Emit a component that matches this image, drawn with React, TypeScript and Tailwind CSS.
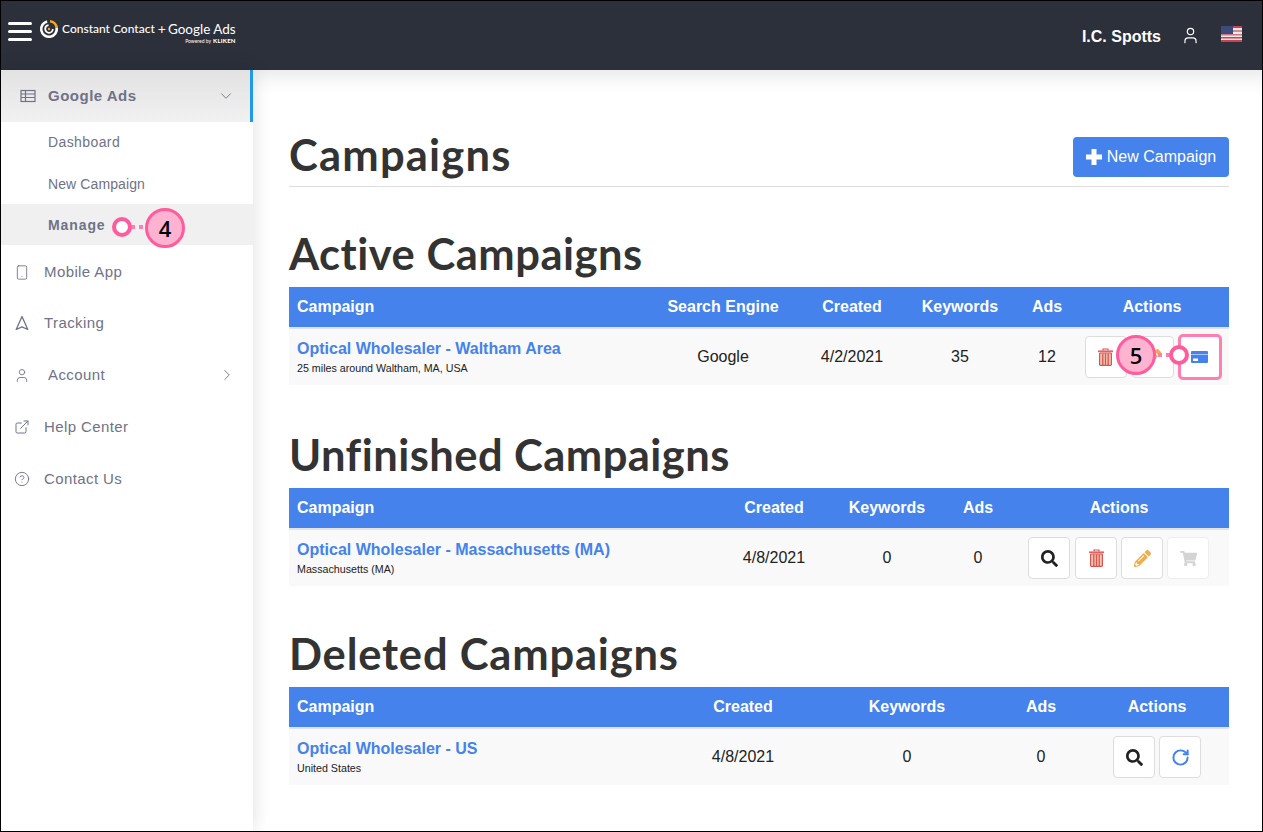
import { FaPencilAlt, FaSearch, FaShoppingCart } from "react-icons/fa";
import { ChevronDown, ChevronRight, CircleHelp, ExternalLink, RotateCw, Smartphone, User } from "lucide-react";
import type { ReactNode } from "react";

const heading = "font-['Lato',sans-serif] font-bold text-[#333333] text-[43.5px] leading-[48px]";

function Logo() {
  return (
    <div className="ml-[7px] flex items-start">
      <svg width="20" height="20" viewBox="0 0 20 20" fill="none" className="mt-[1px]">
        <circle cx="10" cy="10" r="7.8" stroke="#ffffff" strokeWidth="2.6" strokeDasharray="36 13" transform="rotate(-10 10 10)" />
        <path d="M11 2.2a7.8 7.8 0 0 1 6.8 6.8" stroke="#f5a623" strokeWidth="2.6" />
        <circle cx="10" cy="10" r="3.8" stroke="#ffffff" strokeWidth="1.8" strokeDasharray="17 7" />
        <circle cx="10" cy="10" r="1.2" fill="#f5a623" />
      </svg>
      <div className="ml-[3px] flex flex-col items-end font-['Lato',sans-serif] text-white">
        <div className="mt-[2px] flex items-center whitespace-nowrap leading-[18px]">
          <span className="text-[12px] font-medium">Constant Contact</span>
          <span className="ml-[3px] text-[14px]">+</span>
          <span className="ml-[2px] text-[13.5px]">Google Ads</span>
        </div>
        <div className="mt-[-1px] flex items-center leading-[8px]">
          <span className="text-[5px]">Powered by</span>
          <span className="ml-[2px] text-[6px] font-black tracking-[0.2px]">KLIKEN</span>
        </div>
      </div>
    </div>
  );
}

function Flag() {
  return (
    <svg width="21" height="16" viewBox="0 0 21 16">
      <rect width="21" height="16" fill="#f2e6e6" />
      <rect y="0" width="21" height="2" fill="#c8434f" />
      <rect y="4" width="21" height="2" fill="#c98f97" />
      <rect y="8" width="21" height="1.5" fill="#c8767f" />
      <rect y="11" width="21" height="1.5" fill="#c8434f" />
      <rect y="14" width="21" height="2" fill="#c8434f" />
      <rect width="12" height="8" fill="#3c4a7d" />
    </svg>
  );
}

function TopBar() {
  return (
    <header className="flex h-[69px] shrink-0 items-center bg-[#2c303b] pl-[7px] pr-[20px]">
      <div className="mb-[9px] flex w-[24px] flex-col gap-[5px]">
        <span className="h-[3px] rounded-full bg-white" />
        <span className="h-[3px] rounded-full bg-white" />
        <span className="h-[3px] rounded-full bg-white" />
      </div>
      <div className="mb-[8px]">
        <Logo />
      </div>
      <div className="ml-auto flex items-center">
        <span className="mt-[3px] text-[16px] font-bold text-white">I.C. Spotts</span>
        <User size={19} color="#ffffff" strokeWidth={1.5} className="ml-[20px] mb-[1px]" />
        <span className="ml-[21px] mb-[3px] block">
          <Flag />
        </span>
      </div>
    </header>
  );
}

function GridIcon() {
  return (
    <svg width="16" height="14" viewBox="0 0 16 14" fill="none" stroke="#6f7288" strokeWidth="1.2">
      <rect x="1" y="1.5" width="14" height="11" />
      <path d="M1 5h14M1 8.5h14M5.5 1.5v11" />
    </svg>
  );
}

function TrackingIcon() {
  return (
    <svg width="14" height="16" viewBox="0 0 14 16" fill="none" stroke="currentColor" strokeWidth="1.3" strokeLinejoin="round">
      <path d="M7 1.5 12.8 14.5 7 11.8 1.2 14.5Z" />
    </svg>
  );
}

function MainItem({ icon, label, after, indent, className = "" }: { icon: ReactNode; label: string; after?: ReactNode; indent?: boolean; className?: string }) {
  return (
    <div className={`flex h-[52px] items-center pl-[13px] pr-[17px] text-[15px] tracking-[0.4px] text-[#6f7288] ${className}`}>
      <span className="flex w-[16px] justify-center">{icon}</span>
      <span className={indent ? "ml-[18px]" : "ml-[14px]"}>{label}</span>
      {after && <span className="ml-auto">{after}</span>}
    </div>
  );
}

function Sidebar() {
  return (
    <aside className="w-[252px] shrink-0 bg-white shadow-[0_0_18px_rgba(0,0,0,0.13)]">
      <div className="flex h-[52px] items-center border-r-[3px] border-[#1e9be8] bg-gradient-to-b from-[#e2e2e2] to-[#f1f1f1] pl-[19px] pr-[15px]">
        <GridIcon />
        <span className="ml-[12px] text-[15px] font-bold tracking-[0.5px] text-[#6f7288]">Google Ads</span>
        <ChevronDown size={18} color="#6f7288" strokeWidth={1.2} className="ml-auto" />
      </div>
      <div className="text-[14px] text-[#6f7288]">
        <div className="flex h-[41px] items-center pl-[47px] tracking-[0.4px]">Dashboard</div>
        <div className="flex h-[41px] items-center pl-[47px] pt-[2px] tracking-[0.1px]">New Campaign</div>
        <div className="flex h-[41px] items-center bg-[#f0f0f0] pl-[47px] pt-[2px] font-bold tracking-[0.9px]">Manage</div>
      </div>
      <MainItem className="pt-[2px]" icon={<Smartphone size={17} strokeWidth={1.3} />} label="Mobile App" />
      <MainItem icon={<TrackingIcon />} label="Tracking" />
      <MainItem indent icon={<User size={19} strokeWidth={1.3} />} label="Account" after={<ChevronRight size={18} strokeWidth={1.2} />} />
      <MainItem icon={<ExternalLink size={18} strokeWidth={1.5} />} label="Help Center" />
      <MainItem icon={<CircleHelp size={18} strokeWidth={1.4} />} label="Contact Us" />
    </aside>
  );
}

function ActionButton({ children, muted, className = "" }: { children: ReactNode; muted?: boolean; className?: string }) {
  return (
    <span className={`flex h-[42px] w-[42px] items-center justify-center rounded-[4px] border bg-white ${muted ? "border-[#eeeeee]" : "border-[#dddddd]"} ${className}`}>
      {children}
    </span>
  );
}

function TrashIcon() {
  return (
    <svg width="15" height="18" viewBox="0 0 15 18" fill="none">
      <path d="M5 2.5V1h5v1.5" stroke="#d9534f" strokeWidth="1.2" />
      <rect x="0" y="2.4" width="15" height="1.8" fill="#e0626a" />
      <rect x="1.6" y="5" width="11.8" height="12.4" rx="0.8" fill="#f6c6b4" stroke="#d9534f" strokeWidth="1.2" />
      <path d="M4.8 5.5v11.4M7.5 5.5v11.4M10.2 5.5v11.4" stroke="#d9534f" strokeWidth="1.3" />
    </svg>
  );
}

function PlusIcon() {
  return (
    <svg width="16" height="16" viewBox="0 0 16 16" fill="#ffffff">
      <rect x="5.5" y="0" width="5" height="16" />
      <rect x="0" y="5.5" width="16" height="5" />
    </svg>
  );
}

const search = <FaSearch size={17} color="#222222" />;
const pencil = <FaPencilAlt size={17} color="#f0ad4e" />;
const cart = <FaShoppingCart size={17} color="#d4d4d4" />;
const redo = <RotateCw size={19} color="#4582ec" strokeWidth={2.5} />;

function CardIcon() {
  return (
    <svg width="17" height="12" viewBox="0 0 17 12">
      <rect width="17" height="12" fill="#4582ec" rx="1" />
      <rect x="0" y="3" width="17" height="1" fill="#a9c6f6" />
      <rect x="2" y="7.5" width="5" height="2.5" fill="#ffffff" />
    </svg>
  );
}

type Column = { label: string; width: string; value: string };

function CampaignTable({ columns, actionsWidth, campaignWidth, name, sub, actions }: {
  columns: Column[];
  actionsWidth: string;
  campaignWidth: string;
  name: string;
  sub: string;
  actions: ReactNode;
}) {
  return (
    <table className="w-[940px] table-fixed border-collapse text-[16px] text-[#222222]">
      <colgroup>
        <col className={campaignWidth} />
        {columns.map((c) => (
          <col key={c.label} className={c.width} />
        ))}
        <col className={actionsWidth} />
      </colgroup>
      <thead>
        <tr className="h-[41px] border-b-2 border-[#e3e3e3] bg-[#4582ec] font-bold text-white">
          <th className="pl-[8px] text-left">Campaign</th>
          {columns.map((c) => (
            <th key={c.label} className="text-center">{c.label}</th>
          ))}
          <th className="text-center">Actions</th>
        </tr>
      </thead>
      <tbody>
        <tr className="h-[57px] bg-[#f9f9f9]">
          <td className="pb-[2px] pl-[8px] align-middle">
            <div className="pb-[3px] font-bold leading-[20px] text-[#4582ec]">{name}</div>
            <div className="text-[10.7px] leading-[12px]">{sub}</div>
          </td>
          {columns.map((c) => (
            <td key={c.label} className="text-center align-middle">{c.value}</td>
          ))}
          <td>
            <div className="flex justify-center gap-[4px]">{actions}</div>
          </td>
        </tr>
      </tbody>
    </table>
  );
}

function Marker({ n, className }: { n: string; className: string }) {
  return (
    <span className={`absolute z-20 flex h-[40px] w-[40px] items-center justify-center rounded-full border-[3px] border-[#ff5c9d] bg-[#ffb3d0] font-['Open_Sans',sans-serif] text-[22px] font-semibold text-black ${className}`}>
      {n}
    </span>
  );
}

function Ring({ className }: { className: string }) {
  return <span className={`absolute z-20 h-[20px] w-[20px] rounded-full border-[4px] border-[#ff5c9d] bg-white ${className}`} />;
}

function Dots({ className }: { className: string }) {
  return <span className={`absolute z-20 h-[4px] w-[4px] bg-[#ff7fb3] ${className}`} />;
}

export default function App() {
  return (
    <div className="relative flex h-[832px] w-[1263px] flex-col overflow-hidden border border-black bg-white font-['Liberation_Sans',Arial,sans-serif]">
      <TopBar />
      <div className="flex min-h-0 flex-1">
        <Sidebar />
        <main className="min-w-0 flex-1 pl-[36px] pr-[33px] shadow-[inset_0_22px_20px_-16px_rgba(0,0,0,0.1)]">
          <div className="mt-[61px] flex h-[56px] items-start justify-between border-b border-[#dddddd]">
            <h1 className={`${heading} -mt-[1px] tracking-[1.2px]`}>Campaigns</h1>
            <button className="mt-[6px] flex h-[40px] w-[156px] items-center justify-center gap-[5px] rounded-[4px] bg-[#4582ec] text-[16px] text-white">
              <PlusIcon />
              New Campaign
            </button>
          </div>
          <h2 className={`${heading} mt-[42px] tracking-[0.5px]`}>Active Campaigns</h2>
          <div className="mt-[10px]">
            <CampaignTable
              campaignWidth="w-[354px]"
              actionsWidth="w-[154px]"
              name="Optical Wholesaler - Waltham Area"
              sub="25 miles around Waltham, MA, USA"
              columns={[
                { label: "Search Engine", width: "w-[160px]", value: "Google" },
                { label: "Created", width: "w-[98px]", value: "4/2/2021" },
                { label: "Keywords", width: "w-[118px]", value: "35" },
                { label: "Ads", width: "w-[56px]", value: "12" },
              ]}
              actions={
                <>
                  <ActionButton className="ml-[2px] mr-px"><TrashIcon /></ActionButton>
                  <ActionButton>{pencil}</ActionButton>
                  <span className="-my-[2px] flex h-[46px] w-[44px] items-center justify-center rounded-[5px] border-[3px] border-[#ff7fb3] bg-white">
                    <CardIcon />
                  </span>
                </>
              }
            />
          </div>
          <h2 className={`${heading} mt-[45px] tracking-[0.45px]`}>Unfinished Campaigns</h2>
          <div className="mt-[10px]">
            <CampaignTable
              campaignWidth="w-[432px]"
              actionsWidth="w-[220px]"
              name="Optical Wholesaler - Massachusetts (MA)"
              sub="Massachusetts (MA)"
              columns={[
                { label: "Created", width: "w-[106px]", value: "4/8/2021" },
                { label: "Keywords", width: "w-[120px]", value: "0" },
                { label: "Ads", width: "w-[62px]", value: "0" },
              ]}
              actions={
                <>
                  <ActionButton className="-ml-px mr-px">{search}</ActionButton>
                  <ActionButton><TrashIcon /></ActionButton>
                  <ActionButton>{pencil}</ActionButton>
                  <ActionButton muted>{cart}</ActionButton>
                </>
              }
            />
          </div>
          <h2 className={`${heading} mt-[43px] tracking-[0.8px]`}>Deleted Campaigns</h2>
          <div className="mt-[10px]">
            <CampaignTable
              campaignWidth="w-[380px]"
              actionsWidth="w-[144px]"
              name="Optical Wholesaler - US"
              sub="United States"
              columns={[
                { label: "Created", width: "w-[148px]", value: "4/8/2021" },
                { label: "Keywords", width: "w-[180px]", value: "0" },
                { label: "Ads", width: "w-[88px]", value: "0" },
              ]}
              actions={
                <>
                  <ActionButton>{search}</ActionButton>
                  <ActionButton>{redo}</ActionButton>
                </>
              }
            />
          </div>
        </main>
      </div>

      <Dots className="left-[130px] top-[224px]" />
      <Dots className="left-[138px] top-[224px]" />
      <Ring className="left-[111px] top-[216px]" />
      <Marker n="4" className="left-[144px] top-[207px]" />
      <Marker n="5" className="left-[1115px] top-[334px]" />
      <Dots className="left-[1157px] top-[352px]" />
      <Dots className="left-[1165px] top-[352px]" />
      <Ring className="left-[1168px] top-[344px]" />
    </div>
  );
}
